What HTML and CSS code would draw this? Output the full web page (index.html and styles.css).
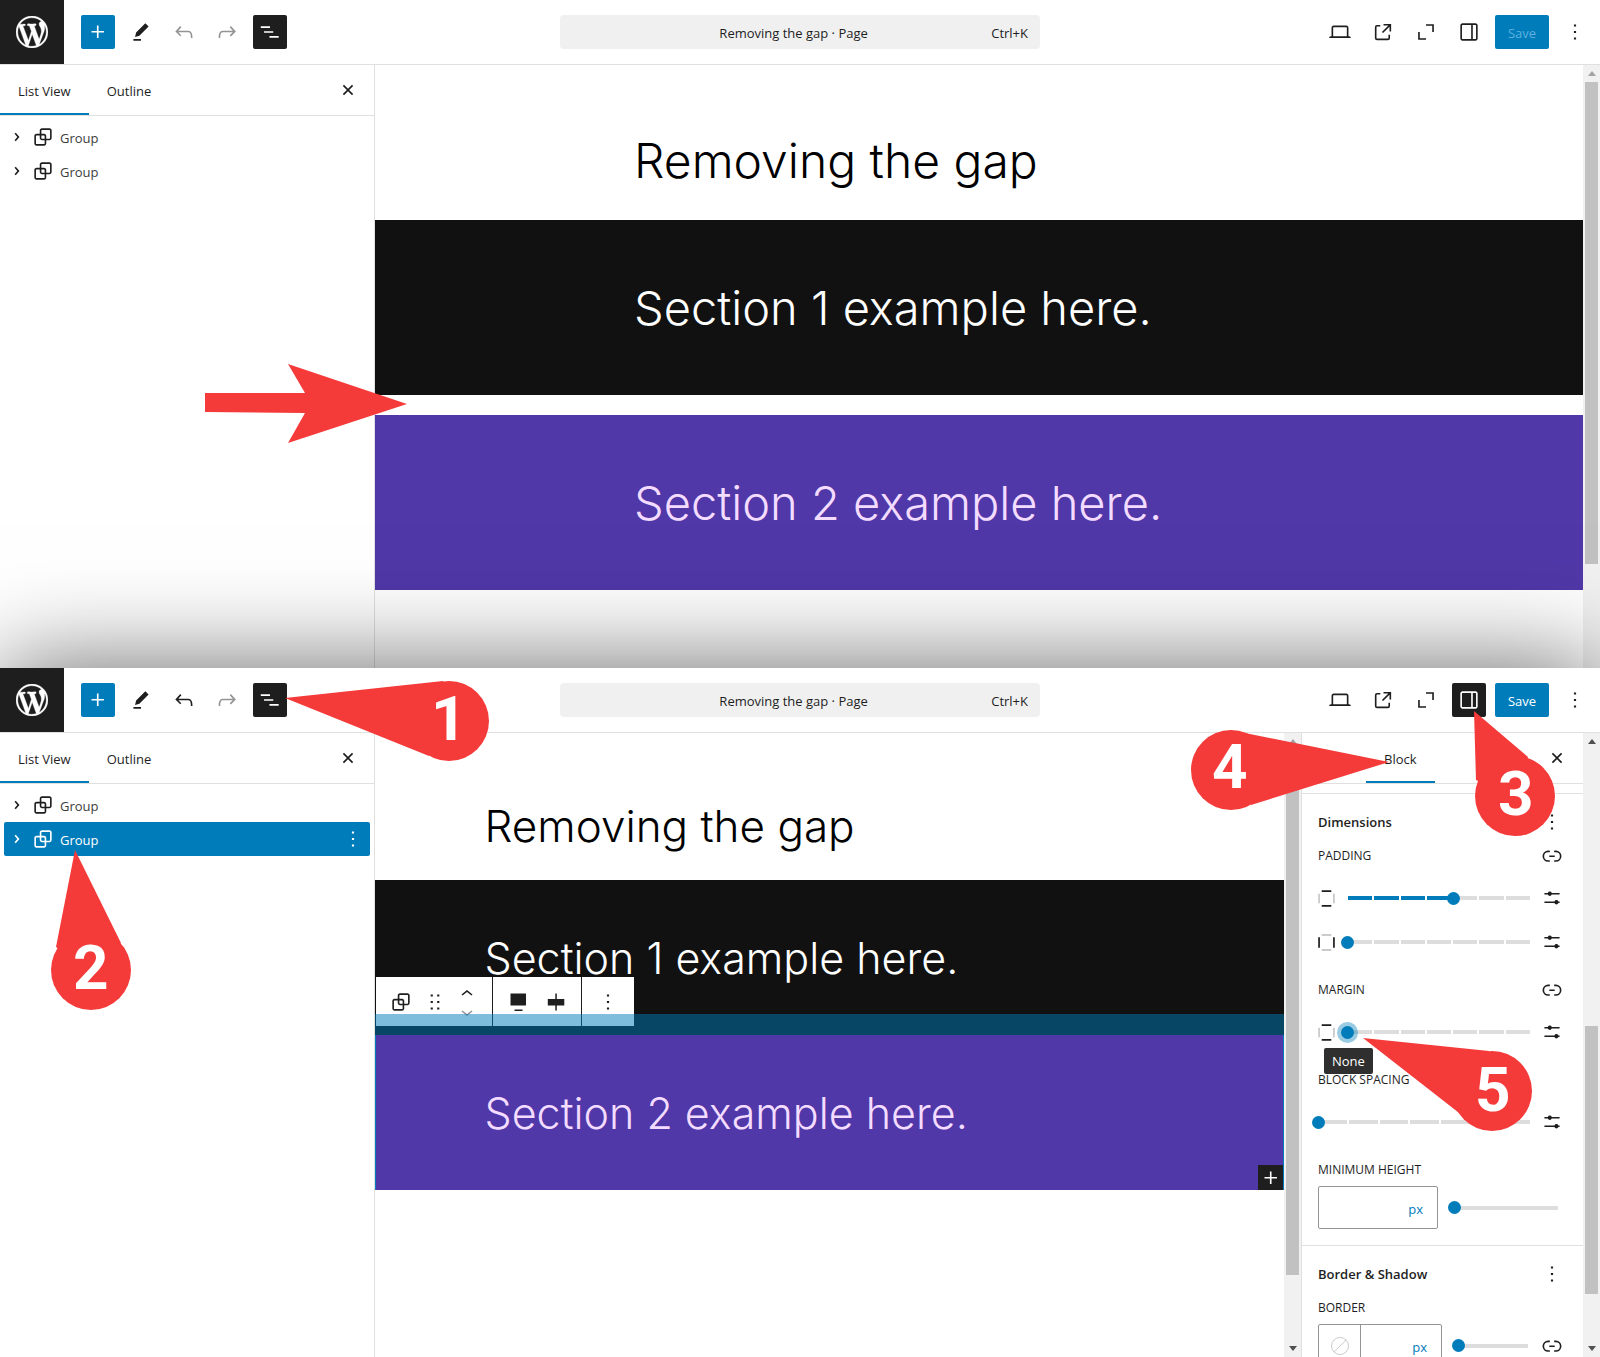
FILE: index.html
```html
<!DOCTYPE html>
<html lang="en">
<head>
<meta charset="utf-8">
<meta name="viewport" content="width=device-width, initial-scale=1">
<title>Removing the gap</title>
<link rel="stylesheet" href="styles.css">
</head>
<body>
<svg class="sprite" aria-hidden="true">
  <symbol id="wp" viewBox="0 0 20 20"><path d="M20 10c0-5.51-4.49-10-10-10C4.48 0 0 4.49 0 10c0 5.52 4.48 10 10 10 5.51 0 10-4.48 10-10zM7.78 15.37L4.37 6.22c.55-.02 1.17-.08 1.17-.08.5-.06.44-1.13-.06-1.11 0 0-1.45.11-2.37.11-.18 0-.37 0-.58-.01C4.12 2.69 6.87 1.11 10 1.11c2.33 0 4.45.87 6.05 2.34-.68-.11-1.65.39-1.65 1.58 0 .74.45 1.36.9 2.1.35.61.55 1.36.55 2.46 0 1.49-1.4 5-1.4 5l-3.03-8.37c.54-.02.82-.17.82-.17.5-.05.44-1.25-.06-1.22 0 0-1.44.12-2.38.12-.87 0-2.33-.12-2.33-.12-.5-.03-.56 1.2-.06 1.22l.92.08 1.26 3.41zM17.41 10c.24-.64.74-1.87.43-4.25.7 1.29 1.05 2.71 1.05 4.25 0 3.29-1.73 6.24-4.4 7.78.97-2.59 1.94-5.2 2.92-7.78zM6.1 18.09C3.12 16.65 1.11 13.53 1.11 10c0-1.3.23-2.48.72-3.59C3.25 10.3 4.67 14.2 6.1 18.09zm4.03-6.63l2.58 6.98c-.86.29-1.76.45-2.71.45-.79 0-1.57-.11-2.29-.33.81-2.38 1.63-4.74 2.42-7.1z" stroke="currentColor" stroke-width=".2"/></symbol>
  <symbol id="plus" viewBox="0 0 24 24"><path d="M11 12.5v5h1.5v-5h5V11h-5V6H11v5H6v1.500z"/></symbol>
  <symbol id="pencil" viewBox="0 0 24 24"><path d="m19 7-3-3-8.500 8.500-1 4 4-1L19 7Zm-7 11.500H5V20h7v-1.500Z"/></symbol>
  <symbol id="undo" viewBox="0 0 24 24"><path d="M18.300 11.700c-.6-.6-1.400-.9-2.300-.9H6.700l2.900-3.300-1.100-1-4.500 5L8.500 16l1-1-2.700-2.700H16c.5 0 .9.2 1.300.5 1 1 1 3.400 1 4.500v.3h1.500v-.2c0-1.500 0-4.300-1.500-5.700z"/></symbol>
  <symbol id="redo" viewBox="0 0 24 24"><path d="M15.600 6.500l-1.100 1 2.900 3.300H8c-.9 0-1.700.3-2.300.9-1.400 1.500-1.400 4.200-1.400 5.600v.2h1.500v-.3c0-1.100 0-3.500 1-4.500.3-.3.7-.5 1.300-.5h9.200L14.500 15l1.100 1.100 4.600-4.600-4.600-5z"/></symbol>
  <symbol id="list" viewBox="0 0 24 24"><path d="M3.500 6H12v1.500H3.500V6Zm3 4.500H15V12H6.500v-1.500ZM20 15h-8.500v1.500H20V15Z" transform="translate(0 .8)"/></symbol>
  <symbol id="close" viewBox="0 0 24 24"><path d="M12 13.060l3.712 3.713 1.061-1.060L13.061 12l3.712-3.712-1.060-1.060L12 10.938 8.288 7.227l-1.061 1.060L10.939 12l-3.712 3.712 1.060 1.061L12 13.061z"/></symbol>
  <symbol id="chevron" viewBox="0 0 24 24"><path d="M10.862 8.040L14.280 12.029L10.862 16.017L9.723 15.040L12.305 12.029L9.723 9.017Z"/></symbol>
  <symbol id="up" viewBox="0 0 24 24"><path d="M6.500 12.400L12 8l5.500 4.400-.9 1.200L12 10l-4.500 3.600-1-1.200z"/></symbol>
  <symbol id="down" viewBox="0 0 24 24"><path d="M17.500 11.600L12 16l-5.500-4.400.9-1.200L12 14l4.500-3.600 1 1.200z"/></symbol>
  <symbol id="group" viewBox="0 0 24 24"><path d="M18 4h-7c-1.100 0-2 .9-2 2v3H6c-1.100 0-2 .9-2 2v7c0 1.100.9 2 2 2h7c1.100 0 2-.9 2-2v-3h3c1.100 0 2-.9 2-2V6c0-1.100-.9-2-2-2zm-4.500 14c0 .3-.2.5-.5.5H6c-.3 0-.5-.2-.5-.5v-7c0-.3.2-.5.5-.5h3V13c0 1.100.9 2 2 2h2.500v3zm0-4.500H11c-.3 0-.5-.2-.5-.5v-2.500H13c.3 0 .5.2.5.5v2.500zm5-.5c0 .3-.2.5-.5.5h-3V11c0-1.100-.9-2-2-2h-2.500V6c0-.3.2-.5.5-.5h7c.3 0 .5.2.5.5v7z"/></symbol>
  <symbol id="desktop" viewBox="0 0 24 24"><path d="M20.500 16h-.7V8c0-1.100-.9-2-2-2H6.200c-1.100 0-2 .9-2 2v8h-.7c-.8 0-1.500.7-1.500 1.500h20c0-.8-.7-1.500-1.500-1.500zM5.700 8c0-.3.2-.5.5-.5h11.600c.3 0 .5.2.5.5v8H5.700V8z"/></symbol>
  <symbol id="external" viewBox="0 0 24 24"><path d="M19.500 4.500h-7V6h4.440l-5.970 5.970 1.060 1.060L18 7.060v4.440h1.500v-7Zm-13 1a2 2 0 0 0-2 2v10a2 2 0 0 0 2 2h10a2 2 0 0 0 2-2v-3H17v3a.5.5 0 0 1-.5.5h-10a.5.5 0 0 1-.5-.5v-10a.5.5 0 0 1 .5-.5h3V5.500h-3Z"/></symbol>
  <symbol id="corners" viewBox="0 0 24 24"><path d="M12 5.500h6.500V12M5.500 12v6.500H12" fill="none" stroke="currentColor" stroke-width="1.500"/></symbol>
  <symbol id="drawer" viewBox="0 0 24 24"><path d="M18 4H6c-1.100 0-2 .9-2 2v12c0 1.100.9 2 2 2h12c1.100 0 2-.9 2-2V6c0-1.100-.9-2-2-2zm-4 14.500H6c-.3 0-.5-.2-.5-.5V6c0-.3.2-.5.5-.5h8v13zm4.500-.5c0 .3-.2.5-.5.5h-2.500v-13H18c.3 0 .5.2.5.5v12z"/></symbol>
  <symbol id="more" viewBox="0 0 24 24"><path d="M13 19h-2v-2h2v2zm0-6h-2v-2h2v2zm0-6h-2V5h2v2z"/></symbol>
  <symbol id="drag" viewBox="0 0 24 24"><path d="M8 7h2V5H8v2zm0 6h2v-2H8v2zm0 6h2v-2H8v2zm6-14v2h2V5h-2zm0 8h2v-2h-2v2zm0 6h2v-2h-2v2z"/></symbol>
  <symbol id="link" viewBox="0 0 24 24"><path d="M10 17.389H8.444A5.194 5.194 0 1 1 8.444 7H10v1.500H8.444a3.694 3.694 0 0 0 0 7.389H10v1.500ZM14 7h1.556a5.194 5.194 0 0 1 0 10.390H14v-1.500h1.556a3.694 3.694 0 0 0 0-7.390H14V7Zm-4.500 6h5v-1.500h-5V13Z"/></symbol>
  <symbol id="settings" viewBox="0 0 24 24"><path d="M19 7.300h-7.200a2 2 0 0 0-3.700 0H5v1.500h3.100a2 2 0 0 0 3.700 0H19zM19 15.200h-1.100a2 2 0 0 0-3.700 0H5v1.500h9.200a2 2 0 0 0 3.700 0H19z"/></symbol>
  <symbol id="sides-v" viewBox="0 0 16 16"><path d="M3.500 1h9M3.500 15h9" stroke="currentColor" stroke-width="1.600"/><path d="M1 3.500v9M15 3.500v9" stroke="#bbb" stroke-width="1.300"/></symbol>
  <symbol id="sides-h" viewBox="0 0 16 16"><path d="M3.500 1h9M3.500 15h9" stroke="#bbb" stroke-width="1.300"/><path d="M1 3v10M15 3v10" stroke="currentColor" stroke-width="1.600"/></symbol>
  <symbol id="full-align" viewBox="0 0 26 26"><path d="M5.500 4.500H21v12H5.500zM9.500 20.500h8V22h-8z"/></symbol>
  <symbol id="middle-align" viewBox="0 0 26 26"><path d="M12.300 4.500h1.500V10h7.500v6.500h-7.500v5h-1.500v-5H4.800V10h7.500z"/></symbol>
  <symbol id="tri-up" viewBox="0 0 8 5"><path d="M4 0l4 5H0z"/></symbol>
  <symbol id="tri-down" viewBox="0 0 8 5"><path d="M4 5l4-5H0z"/></symbol>
</svg>

<section class="editor editor-before">
  <header class="topbar">
    <div class="topbar-side">
      <a class="logo" href="#" aria-label="View pages"><svg><use href="#wp"/></svg></a>
      <div class="tools">
        <button class="btn primary" aria-label="Add block"><svg class="icon"><use href="#plus"/></svg></button>
        <button class="btn" aria-label="Tools"><svg class="icon"><use href="#pencil"/></svg></button>
        <button class="btn" aria-label="Undo" disabled><svg class="icon"><use href="#undo"/></svg></button>
        <button class="btn" aria-label="Redo" disabled><svg class="icon"><use href="#redo"/></svg></button>
        <button class="btn pressed" aria-label="Document overview"><svg class="icon"><use href="#list"/></svg></button>
      </div>
    </div>
    <button class="command"><span class="command-title">Removing the gap · Page</span><span>Ctrl+K</span></button>
    <div class="topbar-side end">
      <button class="btn" aria-label="View"><svg class="icon"><use href="#desktop"/></svg></button>
      <button class="btn" aria-label="View page"><svg class="icon"><use href="#external"/></svg></button>
      <button class="btn" aria-label="Zoom out"><svg class="icon"><use href="#corners"/></svg></button>
      <button class="btn" aria-label="Settings"><svg class="icon"><use href="#drawer"/></svg></button>
      <button class="save" disabled>Save</button>
      <button class="btn" aria-label="Options"><svg class="icon"><use href="#more"/></svg></button>
    </div>
  </header>
  <div class="workspace">
    <aside class="overview">
      <div class="tabs">
        <button class="tab active">List View</button>
        <button class="tab">Outline</button>
        <button class="btn tabs-close" aria-label="Close"><svg class="icon"><use href="#close"/></svg></button>
      </div>
      <ul class="blocks">
        <li class="block"><svg class="icon"><use href="#chevron"/></svg><svg class="icon"><use href="#group"/></svg><a href="#">Group</a></li>
        <li class="block"><svg class="icon"><use href="#chevron"/></svg><svg class="icon"><use href="#group"/></svg><a href="#">Group</a></li>
      </ul>
    </aside>
    <main class="canvas">
      <h1 class="page-title">Removing the gap</h1>
      <div class="band dark"><p class="band-text">Section 1 example here.</p></div>
      <div class="band violet"><p class="band-text">Section 2 example here.</p></div>
    </main>
    <div class="scrollbar">
      <span class="arrow muted"><svg><use href="#tri-up"/></svg></span>
      <span class="thumb thumb-before"></span>
      <span class="rest-before"></span>
    </div>
  </div>
  <svg class="pointer" viewBox="0 0 202 80" aria-hidden="true"><path d="M0 29h100L83 0L202 40L83 79L100 49L0 48z"/></svg>
</section>

<section class="editor editor-after">
  <header class="topbar">
    <div class="topbar-side">
      <a class="logo" href="#" aria-label="View pages"><svg><use href="#wp"/></svg></a>
      <div class="tools">
        <button class="btn primary" aria-label="Add block"><svg class="icon"><use href="#plus"/></svg></button>
        <button class="btn" aria-label="Tools"><svg class="icon"><use href="#pencil"/></svg></button>
        <button class="btn" aria-label="Undo"><svg class="icon"><use href="#undo"/></svg></button>
        <button class="btn" aria-label="Redo" disabled><svg class="icon"><use href="#redo"/></svg></button>
        <button class="btn pressed" aria-label="Document overview"><svg class="icon"><use href="#list"/></svg></button>
      </div>
    </div>
    <button class="command"><span class="command-title">Removing the gap · Page</span><span>Ctrl+K</span></button>
    <div class="topbar-side end">
      <button class="btn" aria-label="View"><svg class="icon"><use href="#desktop"/></svg></button>
      <button class="btn" aria-label="View page"><svg class="icon"><use href="#external"/></svg></button>
      <button class="btn" aria-label="Zoom out"><svg class="icon"><use href="#corners"/></svg></button>
      <button class="btn pressed" aria-label="Settings"><svg class="icon"><use href="#drawer"/></svg></button>
      <button class="save">Save</button>
      <button class="btn" aria-label="Options"><svg class="icon"><use href="#more"/></svg></button>
    </div>
  </header>
  <div class="workspace">
    <aside class="overview">
      <div class="tabs">
        <button class="tab active">List View</button>
        <button class="tab">Outline</button>
        <button class="btn tabs-close" aria-label="Close"><svg class="icon"><use href="#close"/></svg></button>
      </div>
      <ul class="blocks">
        <li class="block"><svg class="icon"><use href="#chevron"/></svg><svg class="icon"><use href="#group"/></svg><a href="#">Group</a></li>
        <li class="block selected"><svg class="icon"><use href="#chevron"/></svg><svg class="icon"><use href="#group"/></svg><a href="#">Group</a><button class="btn block-more" aria-label="Options"><svg class="icon"><use href="#more"/></svg></button></li>
      </ul>
    </aside>
    <main class="canvas compact">
      <h1 class="page-title">Removing the gap</h1>
      <div class="band dark"><p class="band-text">Section 1 example here.</p></div>
      <div class="band violet current">
        <p class="band-text">Section 2 example here.</p>
        <div class="block-toolbar">
          <div class="toolbar-group">
            <button class="btn" aria-label="Group"><svg class="icon"><use href="#group"/></svg></button>
            <button class="btn drag" aria-label="Drag"><svg class="icon"><use href="#drag"/></svg></button>
            <div class="movers">
              <button class="mover" aria-label="Move up"><svg><use href="#up"/></svg></button>
              <button class="mover" aria-label="Move down" disabled><svg><use href="#down"/></svg></button>
            </div>
          </div>
          <div class="toolbar-group">
            <button class="btn" aria-label="Align"><svg class="icon"><use href="#full-align"/></svg></button>
            <button class="btn" aria-label="Vertical alignment"><svg class="icon"><use href="#middle-align"/></svg></button>
          </div>
          <div class="toolbar-group">
            <button class="btn" aria-label="Options"><svg class="icon"><use href="#more"/></svg></button>
          </div>
        </div>
        <div class="margin-preview"></div>
        <button class="appender" aria-label="Add block"><svg class="icon"><use href="#plus"/></svg></button>
      </div>
    </main>
    <div class="scrollbar">
      <span class="arrow muted"><svg><use href="#tri-up"/></svg></span>
      <span class="thumb thumb-canvas"></span>
      <span class="rest-canvas"></span>
      <span class="arrow"><svg><use href="#tri-down"/></svg></span>
    </div>
    <aside class="settings">
      <div class="tabs settings-tabs">
        <button class="tab active">Block</button>
        <button class="btn tabs-close" aria-label="Close"><svg class="icon"><use href="#close"/></svg></button>
      </div>
      <section class="panel">
        <div class="line heading"><h2>Dimensions</h2><button class="end-btn" aria-label="Dimensions options"><svg class="icon"><use href="#more"/></svg></button></div>
        <div class="control">
          <div class="line"><h3>PADDING</h3><button class="end-btn" aria-label="Link sides"><svg class="icon"><use href="#link"/></svg></button></div>
          <div class="sliders">
            <div class="slide"><svg class="side-icon"><use href="#sides-v"/></svg><input class="range steps" type="range" min="0" max="7" value="4" style="--fill:57.14%" aria-label="Vertical padding"><button class="end-btn" aria-label="Custom size"><svg class="icon"><use href="#settings"/></svg></button></div>
            <div class="slide"><svg class="side-icon"><use href="#sides-h"/></svg><input class="range steps" type="range" min="0" max="7" value="0" aria-label="Horizontal padding"><button class="end-btn" aria-label="Custom size"><svg class="icon"><use href="#settings"/></svg></button></div>
          </div>
        </div>
        <div class="control">
          <div class="line"><h3>MARGIN</h3><button class="end-btn" aria-label="Link sides"><svg class="icon"><use href="#link"/></svg></button></div>
          <div class="sliders">
            <div class="slide"><svg class="side-icon"><use href="#sides-v"/></svg><input class="range steps focused" type="range" min="0" max="7" value="0" aria-label="Vertical margin"><button class="end-btn" aria-label="Custom size"><svg class="icon"><use href="#settings"/></svg></button><span class="tip" role="tooltip">None</span></div>
          </div>
        </div>
        <div class="control">
          <div class="line"><h3>BLOCK SPACING</h3></div>
          <div class="sliders">
            <div class="slide"><input class="range steps flush" type="range" min="0" max="7" value="0" aria-label="Block spacing"><button class="end-btn" aria-label="Custom size"><svg class="icon"><use href="#settings"/></svg></button></div>
          </div>
        </div>
        <div class="control">
          <div class="line"><label for="min-height">MINIMUM HEIGHT</label></div>
          <div class="unit-row">
            <div class="unit-field"><input id="min-height" type="text"><span class="unit">px</span></div>
            <input class="range" type="range" value="0" aria-label="Minimum height slider">
          </div>
        </div>
      </section>
      <section class="panel">
        <div class="line heading"><h2>Border &amp; Shadow</h2><button class="end-btn" aria-label="Border options"><svg class="icon"><use href="#more"/></svg></button></div>
        <div class="control">
          <div class="line"><label for="border-width">BORDER</label></div>
          <div class="unit-row">
            <div class="unit-field wide"><button class="swatch" aria-label="Border color"><span></span></button><input id="border-width" type="text"><span class="unit">px</span></div>
            <input class="range" type="range" value="0" aria-label="Border width slider">
            <button class="end-btn" aria-label="Unlink sides"><svg class="icon"><use href="#link"/></svg></button>
          </div>
        </div>
      </section>
    </aside>
    <div class="scrollbar">
      <span class="arrow"><svg><use href="#tri-up"/></svg></span>
      <span class="lead-panel"></span>
      <span class="thumb thumb-panel"></span>
      <span class="rest-panel"></span>
      <span class="arrow"><svg><use href="#tri-down"/></svg></span>
    </div>
  </div>
  <svg class="marker marker-1" viewBox="0 0 205 94"><path d="M0 30L158 13L164 53L144 88z"/><circle cx="164" cy="53" r="40"/><text x="146" y="72">1</text></svg>
  <svg class="marker marker-2" viewBox="0 0 82 162"><path d="M25 0L71 93L40 120L6 97z"/><circle cx="41" cy="120" r="40"/><text x="23" y="139">2</text></svg>
  <svg class="marker marker-3" viewBox="0 0 82 126"><path d="M1 0L55 46L42 85L3 69z"/><circle cx="42" cy="85" r="40"/><text x="25" y="104">3</text></svg>
  <svg class="marker marker-4" viewBox="0 0 200 82"><path d="M200 33L56 4L41 41L62 76z"/><circle cx="42" cy="41" r="40"/><text x="23" y="59">4</text></svg>
  <svg class="marker marker-5" viewBox="0 0 170 94"><path d="M0 0L126 13L129 53L100 78z"/><circle cx="129" cy="53" r="40"/><text x="112" y="73">5</text></svg>
</section>
</body>
</html>
```

FILE: styles.css
```css
:root {
  --blue: #007cba;
  --ink: #1e1e1e;
  --line: #e0e0e0;
  --red: #f53a3a;
}

* { box-sizing: border-box; }

body {
  margin: 0;
  height: 100vh;
  display: flex;
  flex-direction: column;
  overflow: hidden;
  background: #fff;
  color: var(--ink);
  font: 13px/20px "Open Sans", "Noto Sans", sans-serif;
}

h1, h2, h3, p, ul { margin: 0; padding: 0; }
button, input { font: inherit; color: inherit; }
button { border: 0; padding: 0; background: none; }
svg { display: block; fill: currentColor; overflow: visible; }
.sprite { position: absolute; width: 0; height: 0; }
.icon { width: 26px; height: 26px; flex: none; }

.editor { position: relative; display: flex; flex-direction: column; background: #fff; }
.editor-after { flex: 1; min-height: 0; box-shadow: 0 0 96px rgba(0, 0, 0, .6); }

/* Top bar */
.topbar {
  display: grid;
  grid-template-columns: 1fr 480px 1fr;
  align-items: center;
  border-bottom: 1px solid var(--line);
}
.topbar-side { display: flex; align-items: center; }
.topbar-side.end { justify-content: flex-end; gap: 9px; padding-right: 8px; }
.logo { display: grid; place-items: center; width: 64px; height: 64px; background: var(--ink); color: #fff; }
.logo svg { width: 32px; height: 32px; }
.tools { display: flex; gap: 9px; padding-left: 17px; }
.btn { display: grid; place-items: center; width: 34px; height: 34px; flex: none; border-radius: 2px; }
.btn:disabled { color: #949494; }
.btn.primary { background: var(--blue); color: #fff; }
.btn.pressed { background: var(--ink); color: #fff; }
.save { height: 34px; width: 54px; padding-top: 2px; border-radius: 2px; background: var(--blue); color: #fff; }
.save:disabled { color: #5eb1e0; }
.command {
  display: flex;
  align-items: center;
  height: 34px;
  padding: 2px 12px 0 36px;
  border-radius: 4px;
  background: #f0f0f0;
}
.command-title { flex: 1; }

/* Work area */
.workspace { display: flex; flex: 1; min-height: 0; }
.overview { width: 375px; flex: none; border-right: 1px solid var(--line); }
.tabs { display: flex; align-items: stretch; height: 51px; border-bottom: 1px solid var(--line); font-weight: 500; }
.tab { padding: 1px 18px 0; white-space: nowrap; }
.tab.active { box-shadow: inset 0 -2px var(--blue); }
.tabs-close { margin: 8px 9px 0 auto; }
.blocks { list-style: none; padding: 4px; }
.block { display: flex; align-items: center; height: 34px; border-radius: 2px; }
.block a { color: #3c3c3c; text-decoration: none; padding: 2px 0 0 4px; }
.block.selected { background: var(--blue); color: #fff; }
.block.selected a { color: #fff; }
.block-more { margin-left: auto; }

.canvas { flex: 1; min-width: 0; padding: 68px 0 78px; font-family: Inter, "Open Sans", sans-serif; }
.page-title, .band-text { max-width: 690px; margin: 0 auto; line-height: 56px; font-weight: 300; white-space: nowrap; }
.page-title { margin-bottom: 31px; font-size: 48px; color: #000; }
.band-text { font-size: 47px; }
.band { padding: 60px 0 59px; }
.band + .band { margin-top: 20px; }
.dark { background: #111; color: #fff; }
.violet { background: #5038a8; color: #f3dcff; }

.compact .page-title, .compact .band-text { line-height: 51px; }
.compact .page-title { margin-bottom: 28px; font-size: 44px; }
.compact .band-text { font-size: 43px; }
.compact .band { padding: 53px 0 51px; }
.compact .band + .band { margin-top: 0; }
.current { position: relative; box-shadow: inset 1px 0 var(--blue), inset -1px 0 var(--blue); }

.block-toolbar { position: absolute; left: 1px; top: -58px; display: flex; height: 49px; background: #fff; color: var(--ink); }
.toolbar-group { display: flex; align-items: center; gap: 4px; padding: 0 8px; }
.toolbar-group + .toolbar-group { border-left: 1px solid var(--ink); }
.toolbar-group:last-child { padding: 0 9px; }
.drag { width: 24px; }
.movers { display: grid; margin-bottom: 4px; }
.mover { width: 34px; height: 18px; display: grid; place-items: center; }
.mover svg { width: 24px; height: 24px; }
.mover:disabled { color: #949494; }
.margin-preview { position: absolute; left: 0; right: 0; top: -21px; height: 21px; background: rgba(0, 124, 186, .5); }
.appender { position: absolute; right: 1px; bottom: 0; display: grid; place-items: center; width: 25px; height: 25px; background: var(--ink); color: #fff; }

/* Scrollbars */
.scrollbar { display: flex; flex-direction: column; width: 17px; flex: none; background: #f1f1f1; }
.arrow { display: grid; place-items: center; height: 17px; color: #505050; }
.arrow svg { width: 8px; height: 5px; }
.arrow.muted { color: #a3a3a3; }
.thumb { margin: 0 2px; background: #c1c1c1; }
.thumb-before { flex: 480; }
.rest-before { flex: 104; }
.thumb-canvas { flex: 526; }
.rest-canvas { flex: 65; }
.lead-panel { flex: 276; }
.thumb-panel { flex: 269; }
.rest-panel { flex: 46; }

/* Block settings */
.settings { width: 282px; flex: none; overflow: hidden; border-left: 1px solid var(--line); }
.settings-tabs { margin-bottom: 9px; padding-left: 64px; }
.panel { padding: 11px 18px 16px 16px; border-top: 1px solid var(--line); }
.line { display: flex; align-items: center; justify-content: space-between; height: 26px; }
.line.heading { height: 34px; margin-bottom: 4px; }
.line h2 { font-size: 13px; font-weight: 600; }
.line h3, .line label { font-size: 12px; font-weight: 500; }
.control + .control { margin-top: 18px; }
.end-btn { flex: none; }
.sliders { display: grid; gap: 10px; padding-top: 12px; }
.slide { position: relative; display: flex; align-items: center; height: 34px; }
.side-icon { width: 17px; height: 17px; flex: none; }
.side-icon + .range { margin-left: 6px; }

.range {
  --fill: 0%;
  --bar: linear-gradient(to right, var(--blue) var(--fill), #ddd var(--fill));
  appearance: none;
  flex: 1;
  min-width: 0;
  height: 14px;
  margin: 0;
  background: var(--bar) center / calc(100% - 14px) 4px no-repeat;
}
.range.steps {
  background:
    repeating-linear-gradient(to right, transparent 0 calc(100% / 7 - 2px), #fff 0 calc(100% / 7)) center / calc(100% - 14px) 4px no-repeat,
    var(--bar) center / calc(100% - 14px) 4px no-repeat;
}
.range.flush { margin-left: -6px; }
.range::-webkit-slider-thumb { appearance: none; width: 13px; height: 13px; border-radius: 50%; background: var(--blue); }
.range.focused::-webkit-slider-thumb { box-shadow: 0 0 0 4px rgba(0, 124, 186, .4); }

.tip {
  position: absolute;
  left: 6px;
  top: 33px;
  padding: 3px 8px;
  border-radius: 2px;
  background: #2f2f2f;
  color: #fff;
}

.unit-row { display: flex; align-items: center; gap: 10px; padding-top: 3px; }
.unit-row .end-btn { margin-left: -6px; }
.unit-field { display: flex; align-items: center; width: 120px; height: 43px; flex: none; border: 1px solid #949494; border-radius: 2px; }
.unit-field.wide { width: 124px; }
.unit-field input { flex: 1; min-width: 0; height: 100%; border: 0; padding: 0 8px; background: none; }
.unit { padding: 2px 14px 0 0; color: var(--blue); }
.swatch { display: grid; place-items: center; width: 42px; height: 100%; flex: none; border-right: 1px solid #949494; }
.swatch span {
  width: 18px;
  height: 18px;
  border: 1px solid #ccc;
  border-radius: 50%;
  background: linear-gradient(135deg, transparent 48%, #ccc 48% 52%, transparent 52%);
}

/* Callouts drawn over the editors */
.pointer { position: absolute; left: 205px; top: 364px; width: 202px; height: 80px; color: var(--red); }
.marker { position: absolute; color: var(--red); }
.marker text { fill: #fff; font: bold 62px Roboto, sans-serif; }
.marker-1 { left: 285px; top: 0; width: 205px; height: 94px; }
.marker-2 { left: 50px; top: 182px; width: 82px; height: 162px; }
.marker-3 { right: 45px; top: 43px; width: 82px; height: 126px; }
.marker-4 { right: 211px; top: 61px; width: 200px; height: 82px; }
.marker-5 { right: 67px; top: 370px; width: 170px; height: 94px; }
```
